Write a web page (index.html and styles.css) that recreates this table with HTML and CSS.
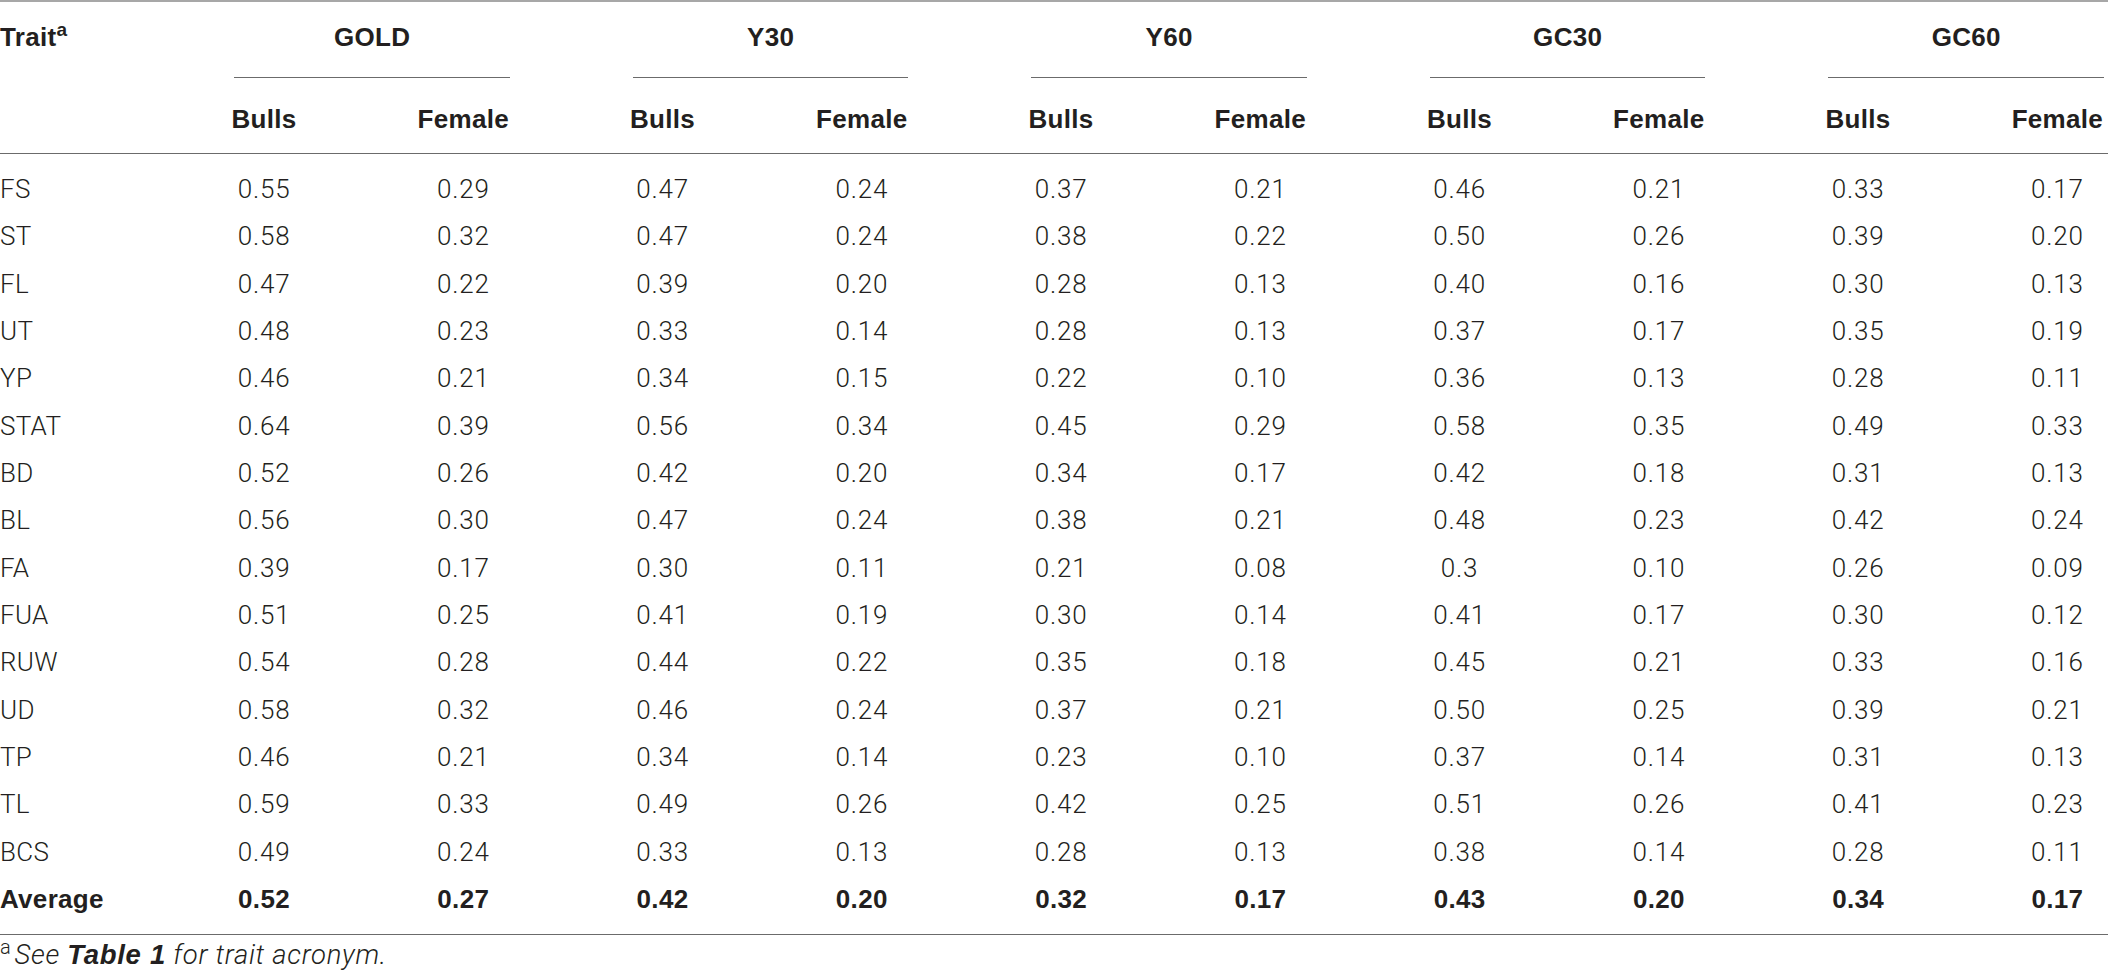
FILE: index.html
```html
<!DOCTYPE html>
<html lang="en">
<head>
  <meta charset="UTF-8" />
  <meta name="viewport" content="width=device-width, initial-scale=1.0"/>
  <title>Accuracy by trait</title>
  <link rel="stylesheet" href="styles.css">
</head>
<body>

  <table class="results">
    <colgroup>
      <col class="col-trait">
      <col class="col-val"><col class="col-val">
      <col class="col-val"><col class="col-val">
      <col class="col-val"><col class="col-val">
      <col class="col-val"><col class="col-val">
      <col class="col-val"><col class="col-val">
    </colgroup>
    <thead>
      <tr class="group-row">
        <th class="trait-head">Trait<sup>a</sup></th>
        <th colspan="2"><div class="group-line">GOLD</div></th>
        <th colspan="2"><div class="group-line">Y30</div></th>
        <th colspan="2"><div class="group-line">Y60</div></th>
        <th colspan="2"><div class="group-line">GC30</div></th>
        <th colspan="2"><div class="group-line">GC60</div></th>
      </tr>
      <tr class="sub-row">
        <th></th>
        <th>Bulls</th><th>Female</th>
        <th>Bulls</th><th>Female</th>
        <th>Bulls</th><th>Female</th>
        <th>Bulls</th><th>Female</th>
        <th>Bulls</th><th>Female</th>
      </tr>
    </thead>
    <tbody>
      <tr class="first"><td>FS</td><td>0.55</td><td>0.29</td><td>0.47</td><td>0.24</td><td>0.37</td><td>0.21</td><td>0.46</td><td>0.21</td><td>0.33</td><td>0.17</td></tr>
      <tr><td>ST</td><td>0.58</td><td>0.32</td><td>0.47</td><td>0.24</td><td>0.38</td><td>0.22</td><td>0.50</td><td>0.26</td><td>0.39</td><td>0.20</td></tr>
      <tr><td>FL</td><td>0.47</td><td>0.22</td><td>0.39</td><td>0.20</td><td>0.28</td><td>0.13</td><td>0.40</td><td>0.16</td><td>0.30</td><td>0.13</td></tr>
      <tr><td>UT</td><td>0.48</td><td>0.23</td><td>0.33</td><td>0.14</td><td>0.28</td><td>0.13</td><td>0.37</td><td>0.17</td><td>0.35</td><td>0.19</td></tr>
      <tr><td>YP</td><td>0.46</td><td>0.21</td><td>0.34</td><td>0.15</td><td>0.22</td><td>0.10</td><td>0.36</td><td>0.13</td><td>0.28</td><td>0.11</td></tr>
      <tr><td>STAT</td><td>0.64</td><td>0.39</td><td>0.56</td><td>0.34</td><td>0.45</td><td>0.29</td><td>0.58</td><td>0.35</td><td>0.49</td><td>0.33</td></tr>
      <tr><td>BD</td><td>0.52</td><td>0.26</td><td>0.42</td><td>0.20</td><td>0.34</td><td>0.17</td><td>0.42</td><td>0.18</td><td>0.31</td><td>0.13</td></tr>
      <tr><td>BL</td><td>0.56</td><td>0.30</td><td>0.47</td><td>0.24</td><td>0.38</td><td>0.21</td><td>0.48</td><td>0.23</td><td>0.42</td><td>0.24</td></tr>
      <tr><td>FA</td><td>0.39</td><td>0.17</td><td>0.30</td><td>0.11</td><td>0.21</td><td>0.08</td><td>0.3</td><td>0.10</td><td>0.26</td><td>0.09</td></tr>
      <tr><td>FUA</td><td>0.51</td><td>0.25</td><td>0.41</td><td>0.19</td><td>0.30</td><td>0.14</td><td>0.41</td><td>0.17</td><td>0.30</td><td>0.12</td></tr>
      <tr><td>RUW</td><td>0.54</td><td>0.28</td><td>0.44</td><td>0.22</td><td>0.35</td><td>0.18</td><td>0.45</td><td>0.21</td><td>0.33</td><td>0.16</td></tr>
      <tr><td>UD</td><td>0.58</td><td>0.32</td><td>0.46</td><td>0.24</td><td>0.37</td><td>0.21</td><td>0.50</td><td>0.25</td><td>0.39</td><td>0.21</td></tr>
      <tr><td>TP</td><td>0.46</td><td>0.21</td><td>0.34</td><td>0.14</td><td>0.23</td><td>0.10</td><td>0.37</td><td>0.14</td><td>0.31</td><td>0.13</td></tr>
      <tr><td>TL</td><td>0.59</td><td>0.33</td><td>0.49</td><td>0.26</td><td>0.42</td><td>0.25</td><td>0.51</td><td>0.26</td><td>0.41</td><td>0.23</td></tr>
      <tr><td>BCS</td><td>0.49</td><td>0.24</td><td>0.33</td><td>0.13</td><td>0.28</td><td>0.13</td><td>0.38</td><td>0.14</td><td>0.28</td><td>0.11</td></tr>
      <tr class="average"><td>Average</td><td>0.52</td><td>0.27</td><td>0.42</td><td>0.20</td><td>0.32</td><td>0.17</td><td>0.43</td><td>0.20</td><td>0.34</td><td>0.17</td></tr>
    </tbody>
  </table>

  <p class="footnote"><sup>a</sup>See <b>Table 1</b> for trait acronym.</p>

</body>
</html>
```

FILE: styles.css
```css
html, body {
  margin: 0;
  overflow: hidden;
  background-color: #fff;
}

body {
  font-family: Roboto, 'Liberation Sans', Arial, sans-serif;
  font-weight: 300;
  font-size: 26px;
  color: #231f20;
}

.results {
  width: 2157px;
  table-layout: fixed;
  border-collapse: separate;
  border-spacing: 0;
}

.col-trait {
  width: 164.4px;
}

.col-val {
  width: 199.25px;
}

.results th {
  font-family: 'Liberation Sans', Arial, sans-serif;
  font-weight: 700;
  line-height: 30px;
  padding: 0;
  text-align: center;
  letter-spacing: 0.3px;
}

.group-row th {
  border-top: 2px solid #a7a7a7;
  padding-top: 20px;
  vertical-align: top;
}

.results .trait-head {
  text-align: left;
}

.group-line {
  margin: 0 53px 0 70px;
  padding-bottom: 25px;
  border-bottom: 1px solid #6b6b6b;
}

.sub-row th {
  padding-top: 26px;
  padding-bottom: 19px;
  border-bottom: 1px solid #6b6b6b;
}

.results td {
  padding: 0;
  line-height: 47.33px;
  text-align: center;
  letter-spacing: 0.8px;
  white-space: nowrap;
}

.results td:first-child {
  text-align: left;
  letter-spacing: 0.3px;
}

.results tr.first td {
  padding-top: 12px;
}

.results tr.average td {
  font-family: 'Liberation Sans', Arial, sans-serif;
  font-weight: 700;
  letter-spacing: 0.3px;
  padding-bottom: 11px;
  border-bottom: 1px solid #6b6b6b;
}

sup {
  font-size: 19px;
  line-height: 0;
  vertical-align: 10px;
}

.footnote {
  margin: 4px 0 0;
  font-size: 27.5px;
  line-height: 32px;
  font-style: italic;
  letter-spacing: 0.7px;
}

.footnote sup {
  font-size: 20px;
  font-style: normal;
  margin-right: 3px;
}

.footnote b {
  font-family: 'Liberation Sans', Arial, sans-serif;
  font-weight: 700;
}
```
